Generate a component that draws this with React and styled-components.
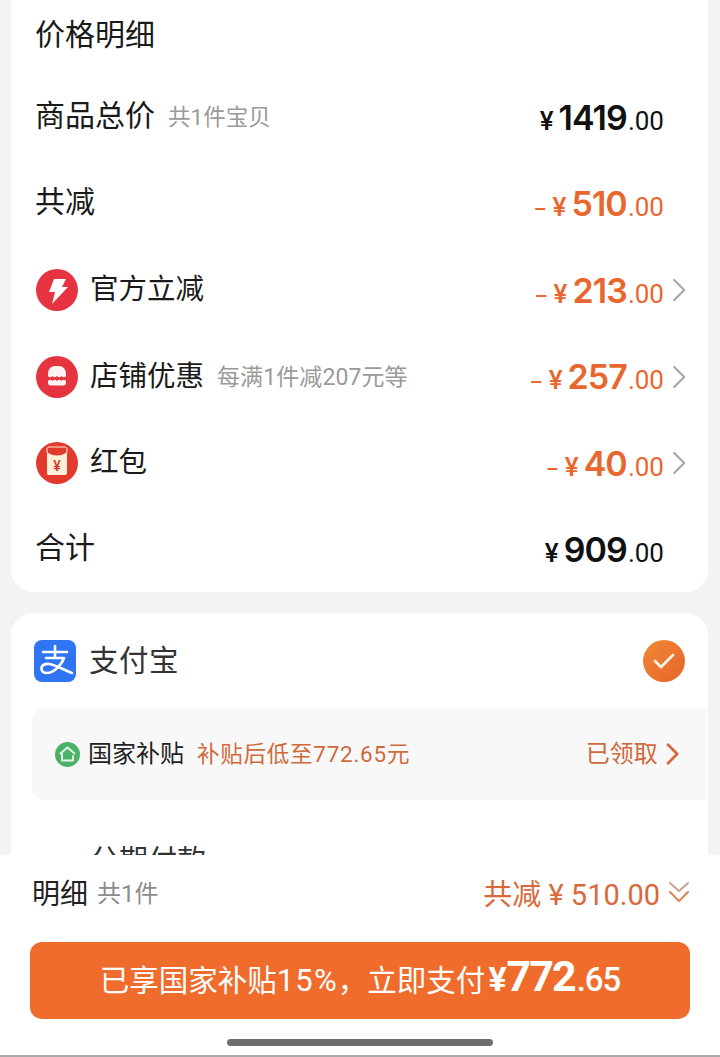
import React from 'react'
import styled, { createGlobalStyle } from 'styled-components'

const FONT = `"Roboto", "Noto Sans CJK SC", sans-serif`
const ORANGE = '#e8672f'

const Global = createGlobalStyle`
html, body { margin: 0; padding: 0; background: #f3f3f3; }
body { font-family: ${FONT}; color: #1a1a1a; }
`

const Page = styled.div`
width: 720px;
height: 1057px;
display: flex;
flex-direction: column;
overflow: hidden;
`

const Scroll = styled.div`
height: 855px;
flex: none;
overflow: hidden;
padding: 0 12px 0 11px;
box-sizing: border-box;
display: flex;
flex-direction: column;
gap: 21px;
`

const Card = styled.section`
flex: none;
background: #fff;
border-radius: 0 0 22px 22px;
padding: 0 22px 0 25px;
height: 592px;
box-sizing: border-box;
`

const PayCard = styled.section`
flex: none;
background: #fff;
border-radius: 22px 22px 0 0;
padding-top: 27px;
height: 330px;
box-sizing: border-box;
`

const Title = styled.div`
height: 63px;
margin: 0 0 11px -1px;
display: flex;
align-items: center;
font-size: 30px;
`

const Row = styled.div`
height: 86.5px;
display: flex;
align-items: center;
justify-content: space-between;
`

const Left = styled.div`
display: flex;
align-items: center;
gap: 12px;
margin-left: ${p => p.$plain ? '-1px' : '0'};
`

const Label = styled.span`
font-size: ${p => p.$small ? '28.5px' : '30px'};
line-height: 40px;
margin-bottom: ${p => p.$small ? '0' : '3px'};
`

const Note = styled.span`
font-size: ${p => p.$small ? '23px' : '22.5px'};
letter-spacing: ${p => p.$small ? '0.1px' : '0'};
color: #9a9a9a;
margin: 0 0 4px 1px;
`

const Right = styled.div`
display: flex;
align-items: center;
`

const Amount = styled.div`
display: flex;
align-items: baseline;
color: ${p => p.$off ? ORANGE : '#111'};
`

const Minus = styled.span`
font-size: 20px;
font-weight: 500;
margin-right: 6px;
`

const Yen = styled.span`
font-size: 26px;
font-weight: 500;
margin-right: 5px;
`

const Whole = styled.span`
font-family: "Inter", ${FONT};
font-size: 34px;
font-weight: 600;
letter-spacing: -0.9px;
`

const Cents = styled.span`
font-size: 26px;
margin-left: 1px;
`

const ChevronSlot = styled.div`
width: 22px;
height: 24px;
display: flex;
justify-content: flex-end;
`

const BadgeWrap = styled.div`
width: 42px;
height: 42px;
flex: none;
`

const PayHead = styled.div`
display: flex;
align-items: center;
justify-content: space-between;
height: 42px;
padding: 0 23px;
`

const PayName = styled.span`
font-size: 29.5px;
line-height: 38px;
margin-bottom: 1px;
color: #333;
letter-spacing: 0.5px;
`

const PayLeft = styled.div`
display: flex;
align-items: center;
gap: 13px;
`

const Check = styled.div`
width: 42px;
height: 42px;
border-radius: 50%;
background: linear-gradient(135deg, #f08a34, #e8622a);
display: flex;
align-items: center;
justify-content: center;
`

const Subsidy = styled.div`
margin: 26px 1px 0 21px;
height: 92px;
background: #f8f8f8;
border-radius: 12px 0 0 12px;
display: flex;
align-items: center;
justify-content: space-between;
padding: 0 28px 0 23px;
`

const SubsidyLeft = styled.div`
display: flex;
align-items: center;
`

const SubsidyName = styled.span`
font-size: 24px;
line-height: 30px;
margin: 0 0 1px 8px;
color: #222;
`

const SubsidyNote = styled.span`
font-size: 22.5px;
line-height: 30px;
margin: 0 0 1px 13px;
color: #cf6a3c;
letter-spacing: 0.75px;
`

const Claimed = styled.div`
display: flex;
align-items: center;
gap: 8px;
font-size: 24px;
line-height: 30px;
margin-bottom: 1px;
color: #cf6a3c;
`

const Installment = styled.div`
margin: 41px 0 0 79px;
font-size: 29px;
line-height: 40px;
color: #333;
`

const Footer = styled.footer`
flex: 1;
background: #fff;
display: flex;
flex-direction: column;
align-items: center;
border-bottom: 2px solid #a8a8a8;
`

const Summary = styled.div`
align-self: stretch;
height: 73px;
padding: 0 30px 0 32px;
display: flex;
align-items: center;
justify-content: space-between;
`

const SummaryLeft = styled.div`
display: flex;
align-items: center;
gap: 9px;
`

const SummaryName = styled.span`
font-size: 28px;
color: #222;
`

const SummaryCount = styled.span`
font-size: 24px;
color: #8c8c8c;
`

const SummaryRight = styled.div`
display: flex;
align-items: center;
gap: 8px;
font-size: 29px;
color: #d9693a;
`

const PayButton = styled.button`
margin-top: 14px;
width: 660px;
height: 77px;
flex: none;
border: none;
border-radius: 12px;
background: #f06c2c;
color: #fff;
font-family: ${FONT};
font-size: 29.5px;
display: flex;
align-items: baseline;
justify-content: center;
padding: 9px 0 0;
box-sizing: border-box;
`

const BtnPercent = styled.span`
font-size: 31px;
letter-spacing: 1.200px;
`

const BtnBig = styled.span`
font-size: 43px;
font-weight: 700;
letter-spacing: -2px;
`

const BtnCents = styled.span`
font-size: 33px;
font-weight: 500;
letter-spacing: -1px;
margin-left: 2px;
`

const BtnYen = styled.span`
font-size: 34px;
font-weight: 700;
margin-left: 3px;
`

const HomeBar = styled.div`
margin-top: 20px;
width: 266px;
height: 7px;
flex: none;
border-radius: 4px;
background: #6e6e6e;
`

const Chevron = ({ color = '#a8a8a8', size = 24, weight = 2.2 }) => (
  <svg width={size * 0.6} height={size} viewBox="0 0 14 24" fill="none">
    <path d="M2 2l10 10L2 22" stroke={color} strokeWidth={weight} strokeLinecap="round" strokeLinejoin="round" />
  </svg>
)

const DoubleChevron = () => (
  <svg width="22" height="22" viewBox="0 0 22 22" fill="none">
    <path d="M2 2l9 8 9-8" stroke="#c9a48f" strokeWidth="2" strokeLinecap="round" strokeLinejoin="round" />
    <path d="M2 11l9 9 9-9" stroke="#dc8a5c" strokeWidth="2.2" strokeLinecap="round" strokeLinejoin="round" />
  </svg>
)

const BoltBadge = () => (
  <BadgeWrap>
    <svg width="42" height="42" viewBox="0 0 42 42">
      <circle cx="21" cy="21" r="21" fill="#e5343f" />
      <path d="M18 10h12l-4 8h6L16 35l3-12h-6z" fill="#fff" />
    </svg>
  </BadgeWrap>
)

const ShopBadge = () => (
  <BadgeWrap>
    <svg width="42" height="42" viewBox="0 0 42 42">
      <circle cx="21" cy="21" r="21" fill="#e5343f" />
      <path d="M12 18c0-5 3-8 7-8h4c4 0 7 3 7 8v2c-1.500 1.600-3 1.600-4.500 0-1.500 1.600-3 1.600-4.500 0-1.500 1.600-3 1.600-4.500 0-1.500 1.600-3 1.600-4.500 0z" fill="#fdf3f3" />
      <path d="M12 25c1.500-1.600 3-1.600 4.500 0 1.500-1.600 3-1.600 4.500 0 1.500-1.600 3-1.600 4.500 0 1.500-1.600 3-1.600 4.500 0v2c0 1.400-1 2.500-2.500 2.500h-13c-1.500 0-2.500-1.100-2.500-2.500z" fill="#fdf3f3" />
    </svg>
  </BadgeWrap>
)

const PacketBadge = () => (
  <BadgeWrap>
    <svg width="42" height="42" viewBox="0 0 42 42">
      <circle cx="21" cy="21" r="21" fill="#e23b2e" />
      <rect x="11" y="5" width="20" height="28" rx="2" fill="#fdf0d8" />
      <path d="M11 7c0-1.100.9-2 2-2h16c1.100 0 2 .9 2 2v3.500c-3 2.500-6.500 3.500-10 3.500s-7-1-10-3.500z" fill="#e23b2e" stroke="#fdf0d8" strokeWidth="1" />
      <text x="21" y="29" fontSize="14" textAnchor="middle" fill="#cf3a2c" fontFamily="Roboto, sans-serif" fontWeight="500">¥</text>
    </svg>
  </BadgeWrap>
)

const AlipayLogo = () => (
  <svg width="42" height="42" viewBox="0 0 42 42">
    <rect width="42" height="42" rx="8" fill="#2f74f0" />
    <path d="M9 12h24M21 6v12M12 18h18C27 26 19 33 13 33 9 33 7.500 31 7.500 28.500 7.500 25 11 23.500 15 24c7 1 15 6 23 9" fill="none" stroke="#fff" strokeWidth="2.600" strokeLinecap="round" strokeLinejoin="round" />
  </svg>
)

const GreenHome = () => (
  <svg width="25" height="25" viewBox="0 0 25 25">
    <circle cx="12.500" cy="12.500" r="12.500" fill="#4cb169" />
    <path d="M5.500 11.500l7-6 7 6M7 11v7.500h11V14" fill="none" stroke="#e8f7ec" strokeWidth="1.800" strokeLinecap="round" strokeLinejoin="round" />
  </svg>
)

const rows = [
  { key: 'total', label: '商品总价', note: '共1件宝贝', whole: '1419' },
  { key: 'off', label: '共减', whole: '510', off: true },
  { key: 'official', label: '官方立减', icon: <BoltBadge />, whole: '213', off: true, more: true },
  { key: 'shop', label: '店铺优惠', note: '每满1件减207元等', icon: <ShopBadge />, whole: '257', off: true, more: true },
  { key: 'packet', label: '红包', icon: <PacketBadge />, whole: '40', off: true, more: true },
  { key: 'sum', label: '合计', whole: '909' },
]

const App = () => {
  return (
    <Page>
      <Global />
      <Scroll>
        <Card>
          <Title>价格明细</Title>
          {rows.map(row => (
            <Row key={row.key}>
              <Left $plain={!row.icon}>
                {row.icon}
                <Label $small={!!row.icon}>{row.label}</Label>
                {row.note && <Note $small={!!row.icon}>{row.note}</Note>}
              </Left>
              <Right>
                <Amount $off={row.off}>
                  {row.off && <Minus>–</Minus>}
                  <Yen>¥</Yen>
                  <Whole>{row.whole}</Whole>
                  <Cents>.00</Cents>
                </Amount>
                <ChevronSlot>{row.more && <Chevron />}</ChevronSlot>
              </Right>
            </Row>
          ))}
        </Card>
        <PayCard>
          <PayHead>
            <PayLeft>
              <AlipayLogo />
              <PayName>支付宝</PayName>
            </PayLeft>
            <Check>
              <svg width="24" height="24" viewBox="0 0 24 24" fill="none">
                <path d="M3 12l6 6L21 6" stroke="#fff3e6" strokeWidth="2.800" strokeLinecap="round" strokeLinejoin="round" />
              </svg>
            </Check>
          </PayHead>
          <Subsidy>
            <SubsidyLeft>
              <GreenHome />
              <SubsidyName>国家补贴</SubsidyName>
              <SubsidyNote>补贴后低至772.65元</SubsidyNote>
            </SubsidyLeft>
            <Claimed>
              已领取
              <Chevron color="#d9693a" size={22} weight={3} />
            </Claimed>
          </Subsidy>
          <Installment>分期付款</Installment>
        </PayCard>
      </Scroll>
      <Footer>
        <Summary>
          <SummaryLeft>
            <SummaryName>明细</SummaryName>
            <SummaryCount>共1件</SummaryCount>
          </SummaryLeft>
          <SummaryRight>
            <span>共减 ¥ 510.00</span>
            <DoubleChevron />
          </SummaryRight>
        </Summary>
        <PayButton>
          已享国家补贴<BtnPercent>15%</BtnPercent>，立即支付
          <BtnYen>¥</BtnYen>
          <BtnBig>772</BtnBig>
          <BtnCents>.65</BtnCents>
        </PayButton>
        <HomeBar />
      </Footer>
    </Page>
  )
}

export default App
